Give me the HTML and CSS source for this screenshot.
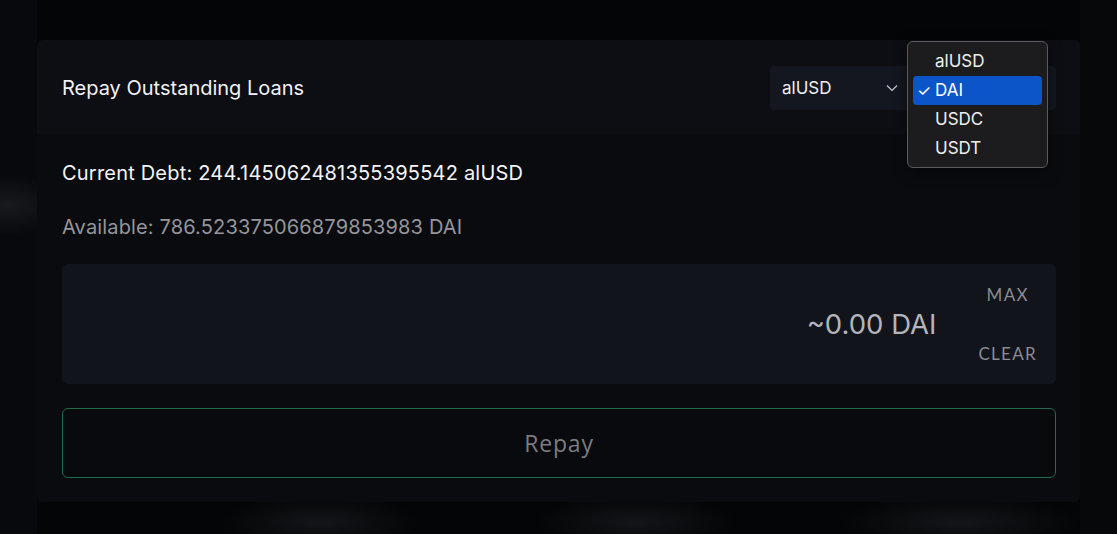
FILE: index.html
```html
<!DOCTYPE html>
<html>
<head>
<meta charset="utf-8">
<link rel="stylesheet" href="styles.css">
</head>
<body>
<div class="page">
  <section class="card">
    <header class="card-head">
      <h2 class="title">Repay Outstanding Loans</h2>
      <div class="selects">
        <div class="select"><span>alUSD</span>
          <svg class="chev" width="12" height="8" viewBox="0 0 12 8"><path d="M1 1.5 L6 6.5 L11 1.5" fill="none" stroke="#c8c8cc" stroke-width="1.2"/></svg>
        </div>
        <div class="select-wrap">
          <div class="select"><span>DAI</span>
            <svg class="chev" width="12" height="8" viewBox="0 0 12 8"><path d="M1 1.5 L6 6.5 L11 1.5" fill="none" stroke="#c8c8cc" stroke-width="1.2"/></svg>
          </div>
          <ul class="menu">
            <li class="opt">alUSD</li>
            <li class="opt sel"><span class="check">✓</span>DAI</li>
            <li class="opt">USDC</li>
            <li class="opt">USDT</li>
          </ul>
        </div>
      </div>
    </header>
    <div class="card-body">
      <p class="debt">Current Debt: 244.145062481355395542 alUSD</p>
      <p class="avail">Available: 786.523375066879853983 DAI</p>
      <div class="amount">
        <div class="value">~0.00 DAI</div>
        <div class="actions">
          <span class="act">MAX</span>
          <span class="act">CLEAR</span>
        </div>
      </div>
      <button class="repay">Repay</button>
    </div>
  </section>
</div>
</body>
</html>
```
FILE: styles.css
```css
html, body {
  margin: 0;
  padding: 0;
}
body {
  width: 1117px;
  height: 534px;
  overflow: hidden;
  font-family: "Inter", "Liberation Sans", sans-serif;
  background:
    radial-gradient(ellipse 100px 26px at 320px 522px, rgba(32,34,38,0.55), transparent),
    radial-gradient(ellipse 100px 26px at 635px 522px, rgba(32,34,38,0.55), transparent),
    radial-gradient(ellipse 120px 26px at 960px 522px, rgba(32,34,38,0.55), transparent),
    radial-gradient(ellipse 60px 30px at 8px 205px, rgba(40,42,46,0.5), transparent),
    linear-gradient(90deg, #08090c 0, #08090c 37px, #040507 37px, #040507 1080px, #07080a 1080px);
}
.page {
  padding: 40px 37px 32px 37px;
}
.card {
  width: 1043px;
  height: 462px;
  box-sizing: border-box;
  background: #0a0b0f;
  border-radius: 6px;
  display: flex;
  flex-direction: column;
}
.card-head {
  height: 94px;
  box-sizing: border-box;
  padding: 1px 24px 0 25px;
  background: #0d0e13;
  border-radius: 6px 6px 0 0;
  display: flex;
  align-items: center;
  justify-content: space-between;
}
.title {
  margin: 0;
  font-size: 20px;
  font-weight: 400;
  color: #f2f2f4;
}
.selects {
  display: flex;
  gap: 6px;
}
.select-wrap {
  position: relative;
}
.select {
  width: 140px;
  height: 44px;
  box-sizing: border-box;
  padding: 0 12px 0 12px;
  background: #141720;
  border-radius: 4px;
  display: flex;
  align-items: center;
  justify-content: space-between;
  font-size: 17px;
  color: #f0f0f2;
}
.chev {
  display: block;
}
.menu {
  position: absolute;
  left: -9px;
  top: -25px;
  width: 141px;
  height: 127px;
  box-sizing: border-box;
  margin: 0;
  padding: 5px 5px;
  list-style: none;
  background: #1c1c1f;
  border: 1px solid #5a5a5e;
  border-radius: 6px;
  box-shadow: 0 4px 14px rgba(0,0,0,0.5);
}
.opt {
  height: 29px;
  line-height: 29px;
  padding-left: 22px;
  font-size: 17px;
  color: #efefef;
  border-radius: 4px;
  position: relative;
}
.opt.sel {
  background: #0b55c8;
  color: #ffffff;
}
.check {
  position: absolute;
  left: 4px;
  top: 0;
  font-size: 16px;
}
.card-body {
  padding: 27px 24px 24px 25px;
  display: flex;
  flex-direction: column;
}
.debt {
  margin: 0;
  font-size: 20px;
  line-height: 24px;
  letter-spacing: 0.2px;
  color: #f4f4f6;
}
.avail {
  margin: 30px 0 0 0;
  font-size: 20px;
  line-height: 24px;
  letter-spacing: 0.15px;
  color: #95959b;
}
.amount {
  margin-top: 25px;
  height: 120px;
  background: #12141c;
  border-radius: 6px;
  display: flex;
  align-items: center;
  justify-content: flex-end;
  padding-right: 19px;
}
.value {
  font-size: 27.5px;
  color: #b4b4ba;
  margin-right: 42px;
}
.actions {
  display: flex;
  flex-direction: column;
  align-items: center;
  gap: 38px;
  font-family: "Lato", "Open Sans", sans-serif;
  font-size: 17px;
  color: #8b8b92;
  letter-spacing: 1.3px;
}
.repay {
  margin-top: 24px;
  height: 70px;
  background: #090a0e;
  border: 1px solid #1f6b4e;
  border-radius: 6px;
  font-family: "Open Sans", "Lato", sans-serif;
  font-size: 23px;
  letter-spacing: 0.8px;
  color: #7c7c80;
}
```
